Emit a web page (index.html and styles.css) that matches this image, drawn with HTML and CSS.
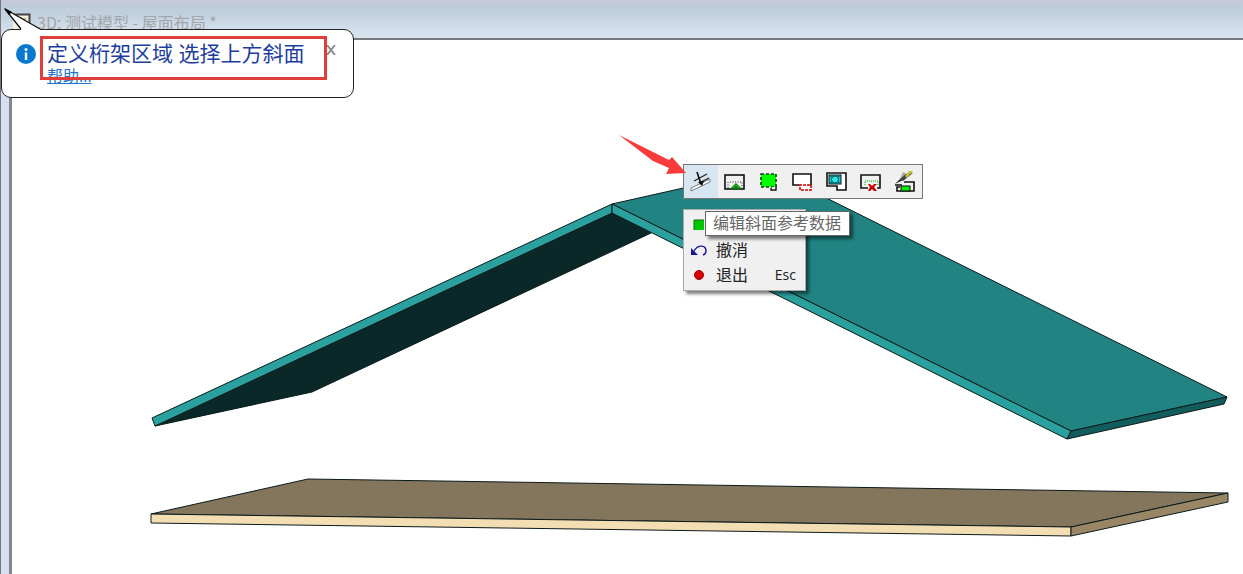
FILE: index.html
```html
<!DOCTYPE html>
<html lang="zh-CN">
<head>
<meta charset="utf-8">
<title>3D: 测试模型 - 屋面布局</title>
<link rel="stylesheet" href="styles.css">
</head>
<body>
<div class="window">
  <header class="titlebar">
    <svg class="app-icon" width="18" height="18" viewBox="0 0 18 18" aria-hidden="true">
      <path d="M0 1H16V17H0Z" fill="#f4f1e4"/><path d="M0 1.500H16.500V18" fill="none" stroke="#444" stroke-width="2"/>
      <path d="M5 5h8v7H5z" fill="#b9b08a"/><path d="M8 4v9M5 9h8" stroke="#555"/>
    </svg>
    <h1 class="title">3D: 测试模型 - 屋面布局 *</h1>
  </header>
  <main class="viewport">
  </main>

  <svg class="scene" viewBox="0 0 1243 574" preserveAspectRatio="xMinYMin meet" role="img" aria-label="屋面模型">
    <g stroke="#0b1a1a" stroke-width="1" stroke-linejoin="round">
      <path d="M155 426L612 213L651 233L312 392Z" fill="#0b2828"/>
      <path d="M152 418L612 204V213L155 426Z" fill="#2aa09f"/>
      <path d="M612 204L768 169L1227 397L1071 431Z" fill="#218483"/>
      <path d="M612 204L1071 431L1067 439L612 213Z" fill="#2aa09f"/>
      <path d="M1071 431L1227 397L1224 404L1067 439Z" fill="#135c5c"/>
      <path d="M151 514L308 479L1228 493L1071 527Z" fill="#84765d"/>
      <path d="M151 514L1071 527V536L151 523Z" fill="#f3deb4"/>
      <path d="M1071 527L1228 493V502L1071 536Z" fill="#988664"/>
    </g>
  </svg>

  <section class="balloon">
    <svg class="tail" width="38" height="24" viewBox="0 0 38 24" aria-hidden="true">
      <path d="M18 22L2 2L37 22V24H18Z" fill="#fff"/>
      <path d="M18 22L2 2L37 22" fill="none" stroke="#111" stroke-width="1.3"/>
      <path d="M1 1L9 5L6 8Z" fill="#000"/>
    </svg>
    <svg class="info" width="20" height="20" viewBox="0 0 20 20" aria-hidden="true">
      <circle cx="10" cy="10" r="10" fill="#0878d0"/>
      <circle cx="10" cy="5.500" r="1.500" fill="#fff"/><path d="M10 8.500V16" stroke="#fff" stroke-width="2.400"/>
    </svg>
    <div class="message">
      <h2 class="headline">定义桁架区域 选择上方斜面</h2>
      <a class="help" href="#">帮助...</a>
    </div>
    <button class="close" type="button" aria-label="关闭">
      <svg width="10" height="10" viewBox="0 0 10 10"><path d="M1 0L9 10M9 0L1 10" stroke="#8c8c8c" stroke-width="2"/></svg>
    </button>
    <div class="highlight"></div>
  </section>

  <div class="toolbar" role="toolbar">
    <button class="tool active" type="button" aria-label="编辑斜面参考数据">
      <svg width="22" height="22" viewBox="0 0 22 22"><path d="M1 17L20 8V11L1 20Z" fill="#fff" stroke="#777"/><path d="M4 10L17 3M9 12L19 7" stroke="#222" stroke-width="1.200"/><path d="M7 1L11 13" stroke="#111" stroke-width="1.600"/><path d="M8 11L14 10L12 15Z" fill="#111"/></svg>
    </button>
    <button class="tool" type="button" aria-label="区域">
      <svg width="22" height="22" viewBox="0 0 22 22"><rect x="1" y="4" width="19" height="14" fill="none" stroke="#111" stroke-width="1.600"/><path d="M6 11H18V18M4 11V18" fill="none" stroke="#333" stroke-dasharray="1 1.500"/><path d="M6 18L12 12L18 18Z" fill="#087a08"/><path d="M9 17l3-3 3 3" stroke="#20d020" fill="none"/></svg>
    </button>
    <button class="tool" type="button" aria-label="选择区域">
      <svg width="22" height="22" viewBox="0 0 22 22"><path d="M3 3H18V16H3Z" fill="#0f0" stroke="#064006" stroke-width="1.600" stroke-dasharray="3 2"/><path d="M13 17V19H18V15" fill="#fff" stroke="#111" stroke-width="1.400"/></svg>
    </button>
    <button class="tool" type="button" aria-label="切除区域">
      <svg width="22" height="22" viewBox="0 0 22 22"><path d="M7 14H1V3H19V14" fill="#fff" stroke="#111" stroke-width="1.600"/><path d="M7 14H19V19H8V14" fill="#fff" stroke="#d00000" stroke-width="1.600" stroke-dasharray="3 1"/></svg>
    </button>
    <button class="tool" type="button" aria-label="开口">
      <svg width="22" height="22" viewBox="0 0 22 22"><path d="M1 2H20V19H11V15H1Z" fill="#fff" stroke="#111" stroke-width="1.600"/><rect x="3" y="4" width="12" height="9" fill="#0ccfd5" stroke="#111"/><circle cx="9" cy="8.500" r="3.500" fill="#30e4e8" stroke="#064c50"/><path d="M3 4l3 2M15 4l-3 2M3 13l3-2M15 13l-3-2" stroke="#064c50"/></svg>
    </button>
    <button class="tool" type="button" aria-label="删除区域">
      <svg width="22" height="22" viewBox="0 0 22 22"><path d="M8 17H1V4H20V17H17" fill="none" stroke="#111" stroke-width="1.600"/><path d="M5 10H18" stroke="#0a0" stroke-dasharray="1 1"/><path d="M5 14V11M18 11V15" stroke="#0a0" stroke-dasharray="1 1"/><path d="M8 13H10L12 15L14 13H17L14 16L17 20H14L12 18L10 20H8L10 16Z" fill="#c80000"/></svg>
    </button>
    <button class="tool" type="button" aria-label="编辑属性">
      <svg width="22" height="22" viewBox="0 0 22 22"><path d="M1 13L7 7L9 9Z" fill="#222"/><path d="M6 8L9 1L13 3L9 10Z" fill="#aaa"/><path d="M6 8L12 3L19 2L9 10Z" fill="#444"/><path d="M11 5L15 0H19L13 7Z" fill="#c6bd32"/><path d="M1 14H8M10 11H20V20H3V16H6" fill="none" stroke="#111" stroke-width="1.600"/><rect x="7" y="15" width="9" height="5" fill="#0e0" stroke="#111"/></svg>
    </button>
  </div>

  <svg class="arrow" width="70" height="44" viewBox="0 0 70 44" aria-hidden="true">
    <path d="M2 1L52 26L55 23L69 39L49 40L52 34L36 27Z" fill="#f83b3b"/>
  </svg>

  <div class="menu" role="menu">
    <button class="item" type="button" role="menuitem" aria-label="确定">
      <svg width="18" height="18" viewBox="0 0 18 18"><path d="M4 4H14V14H4Z" fill="#00c800"/><path d="M4 14V4H14" fill="none" stroke="#087008"/></svg>
    </button>
    <button class="item" type="button" role="menuitem">
      <svg width="18" height="18" viewBox="0 0 18 18"><path d="M4 10C8 3 16 4 16 10Q16 13 13 14" fill="none" stroke="#15159c" stroke-width="1.400"/><path d="M1 7V14H8Z" fill="#15159c"/></svg>
      <span>撤消</span>
    </button>
    <button class="item" type="button" role="menuitem">
      <svg width="18" height="18" viewBox="0 0 18 18"><circle cx="9" cy="9" r="4.500" fill="#d80000" stroke="#900"/></svg>
      <span>退出</span><kbd class="key">Esc</kbd>
    </button>
  </div>
  <div class="tooltip" role="tooltip">编辑斜面参考数据</div>
</div>
</body>
</html>
```
FILE: styles.css
```css
* { box-sizing: border-box; }
body {
  margin: 0;
  font-family: "Open Sans", "Noto Sans CJK SC", sans-serif;
  font-size: 16px;
}
button { font: inherit; border: 0; padding: 0; background: none; color: inherit; }
button svg { display: block; }
.window {
  position: relative;
  min-height: 100vh;
  display: flex;
  flex-direction: column;
  overflow: hidden;
  background: #d5e2ee;
  border-left: 1px solid #77757f;
}
.titlebar {
  display: flex;
  align-items: center;
  gap: 6px;
  height: 38px;
  padding: 6px 12px 0;
  background: linear-gradient(#c7cadb 0, #c5cadb 4px, #bccdda 6px, #c4d1df 16px, #d5e2ee 32px, #d5e2ee 100%);
}
.app-icon { flex: none; }
.title { margin: 0; font-family: "Noto Sans CJK SC", sans-serif; font-size: 16px; font-weight: 400; line-height: 24px; color: #a3a6aa; }
.viewport {
  flex: 1;
  margin-left: 8px;
  background: #fff;
  border-top: 2px solid #777b80;
  border-left: 3px solid #88858f;
}
.scene { position: absolute; top: 0; left: -1px; width: 100vw; }
.balloon {
  position: absolute;
  left: 0;
  top: 29px;
  width: 353px;
  height: 69px;
  display: flex;
  align-items: flex-start;
  padding: 10px 17px 0 14px;
  background: #fff;
  border: 1px solid #222;
  border-radius: 10px;
}
.tail { position: absolute; left: 1px; top: -23px; }
.info { flex: none; margin-top: 4px; }
.message { display: flex; flex-direction: column; align-items: flex-start; margin-left: 11px; flex: 1; }
.headline { margin: 0; font-size: 21px; font-weight: 400; line-height: 26px; color: #1d3e9c; white-space: nowrap; }
.help { font-size: 16px; line-height: 20px; color: #2474cb; }
.close { flex: none; margin-top: 5px; }
.highlight { position: absolute; left: 38px; top: 6px; width: 287px; height: 44px; border: 3px solid #e23d3d; }
.arrow { position: absolute; left: 616px; top: 134px; }
.toolbar {
  position: absolute;
  left: 682px;
  top: 164px;
  display: flex;
  background: #f0f0f0;
  border: 1px solid #777;
}
.tool { width: 34px; height: 33px; display: grid; place-items: center; }
.tool.active { background: #d8e6f2; }
.menu {
  position: absolute;
  left: 682px;
  top: 209px;
  width: 123px;
  padding: 2px 9px 3px 6px;
  background: #f0f0f0;
  border: 1px solid #aaa;
  box-shadow: 3px 3px 3px rgba(0, 0, 0, .5);
}
.item { display: flex; align-items: center; width: 100%; height: 25px; gap: 8px; color: #222; line-height: 22px; text-align: left; }
.key { margin-left: auto; font: inherit; font-size: 14px; }
.tooltip {
  position: absolute;
  left: 704px;
  top: 211px;
  padding: 0 8px 0 7px;
  line-height: 23px;
  color: #666;
  background: #fff;
  border: 1px solid #666;
  box-shadow: 3px 3px 3px rgba(0, 0, 0, .5);
}
```
